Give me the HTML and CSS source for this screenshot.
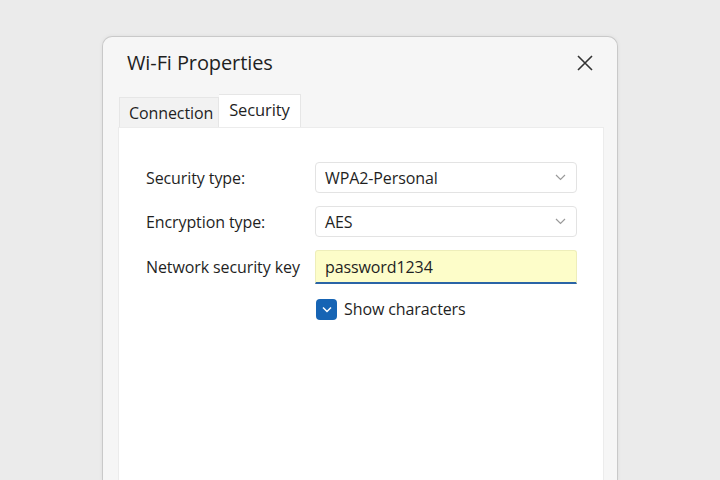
FILE: index.html
```html
<!DOCTYPE html>
<html lang="en">
<head>
  <meta charset="UTF-8" />
  <title>Wi-Fi Properties</title>
  <link rel="stylesheet" href="styles.css">
</head>
<body>
  <div class="dialog">
    <div class="titlebar">
      <h1>Wi-Fi Properties</h1>
      <button class="close" aria-label="Close">
        <svg width="16" height="16" viewBox="0 0 16 16"><path d="M1 1L15 15M15 1L1 15" stroke="#333" stroke-width="1.6" fill="none"/></svg>
      </button>
    </div>

    <div class="tabs">
      <div class="tab">Connection</div>
      <div class="tab active">Security</div>
    </div>

    <div class="panel">
      <div class="row">
        <label>Security type:</label>
        <div class="select">
          <span>WPA2-Personal</span>
          <svg width="11" height="7" viewBox="0 0 11 7"><path d="M1 1L5.5 5.5L10 1" stroke="#9a9a9a" stroke-width="1.2" fill="none"/></svg>
        </div>
      </div>
      <div class="row">
        <label>Encryption type:</label>
        <div class="select">
          <span>AES</span>
          <svg width="11" height="7" viewBox="0 0 11 7"><path d="M1 1L5.5 5.5L10 1" stroke="#9a9a9a" stroke-width="1.2" fill="none"/></svg>
        </div>
      </div>
      <div class="row">
        <label>Network security key</label>
        <div class="keyfield">password1234</div>
      </div>
      <div class="row">
        <label></label>
        <div class="check">
          <span class="box">
            <svg width="12" height="10" viewBox="0 0 12 10"><path d="M2 3.5L6 7.5L10 3.5" stroke="#fff" stroke-width="1.5" fill="none"/></svg>
          </span>
          Show characters
        </div>
      </div>
    </div>
  </div>
</body>
</html>
```

FILE: styles.css
```css
body {
  margin: 0;
  background: #ebebeb;
  font-family: "Open Sans", "Noto Sans", sans-serif;
  color: #1f1f1f;
  height: 480px;
  overflow: hidden;
}
.dialog {
  margin: 36px 0 0 102px;
  width: 514px;
  height: 444px;
  display: flex;
  flex-direction: column;
  background: #f6f6f6;
  border: 1px solid #c9c9c9;
  border-bottom: none;
  border-radius: 10px 10px 0 0;
  box-shadow: 0 0 4px rgba(0,0,0,0.06);
}
.titlebar {
  display: flex;
  align-items: center;
  justify-content: space-between;
  height: 50px;
  padding: 0 24px 0 24px;
}
.titlebar h1 {
  margin: 0;
  font-size: 20px;
  font-weight: 400;
  letter-spacing: -0.1px;
}
.close {
  background: none;
  border: none;
  padding: 0;
  width: 16px;
  height: 16px;
  margin-top: 2px;
}
.tabs {
  display: flex;
  align-items: flex-end;
  margin: 8px 0 0 16px;
  height: 32px;
}
.tab {
  font-size: 16px;
  padding: 0 5px 0 9px;
  height: 29px;
  line-height: 30px;
  background: #f2f2f2;
  border: 1px solid #e6e6e6;
  border-bottom: none;
  letter-spacing: -0.1px;
}
.tab.active {
  background: #fff;
  height: 32px;
  line-height: 30px;
  padding: 0 10px 0 10px;
  border-left: none;
  font-size: 16.5px;
}
.panel {
  flex: 1;
  margin: 0 13px 0 15px;
  background: #fff;
  border: 1px solid #ececec;
  border-bottom: none;
  padding: 34px 0 0 27px;
}
.row {
  display: flex;
  align-items: center;
  margin-bottom: 13px;
}
.row label {
  width: 169px;
  font-size: 16px;
  letter-spacing: -0.1px;
}
.select, .keyfield {
  width: 241px;
  height: 29px;
  padding: 0 10px 0 9px;
  display: flex;
  align-items: center;
  justify-content: space-between;
  font-size: 16px;
  letter-spacing: -0.1px;
  border: 1px solid #e3e3e3;
  border-radius: 4px;
}
.keyfield {
  height: 31px;
  background: #fdfdc9;
  border: 1px solid #eeeeba;
  border-bottom: 2px solid #2a64a6;
  border-radius: 3px 3px 0 0;
}
.check {
  display: flex;
  align-items: center;
  gap: 7px;
  font-size: 16px;
  letter-spacing: -0.1px;
  margin-top: 1px;
}
.box {
  width: 21px;
  height: 21px;
  margin-left: 1px;
  background: #1664b4;
  border-radius: 4px;
  display: flex;
  align-items: center;
  justify-content: center;
}
```
